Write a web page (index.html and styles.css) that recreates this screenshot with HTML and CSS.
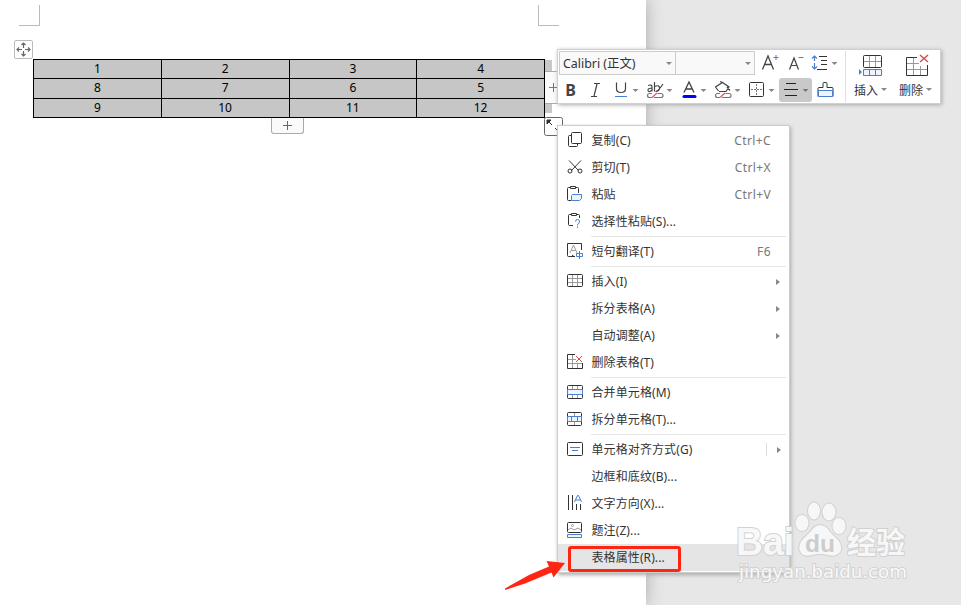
FILE: index.html
```html
<!DOCTYPE html>
<html lang="zh-CN">
<head>
<meta charset="utf-8">
<title>表格属性</title>
<link rel="stylesheet" href="styles.css">
</head>
<body>
<main class="page">
  <div class="margins"><i class="corner left"></i><i class="corner right"></i></div>
  <table class="grid">
    <tr><td>1</td><td>2</td><td>3</td><td>4</td></tr>
    <tr><td>8</td><td>7</td><td>6</td><td>5</td></tr>
    <tr><td>9</td><td>10</td><td>11</td><td>12</td></tr>
  </table>
  <svg class="move" width="19" height="19" viewBox="0 0 19 19"><rect x=".5" y=".5" width="18" height="18" rx="1.5" fill="#fff" stroke="#bbb"/><path d="M9.500 3v5M9.500 11v5M3 9.500h5M11 9.500h5M7.500 5l2-2 2 2M7.500 14l2 2 2-2M5 7.500l-2 2 2 2M14 7.500l2 2-2 2" fill="none" stroke="#666" stroke-width="1.200"/></svg>
  <i class="endmark"></i>
  <div class="add-col"><svg width="9" height="9"><path d="M0 4.500h9M4.500 0v9" stroke="#777"/></svg></div>
  <div class="add-row"><svg width="9" height="9"><path d="M0 4.500h9M4.500 0v9" stroke="#666"/></svg></div>
  <svg class="resize" width="19" height="19"><rect x=".5" y=".5" width="18" height="18" rx="2" fill="#fff" stroke="#666"/><path d="M3 3h4L3 7zM4 4l4 4M11 11l3 3" fill="#333" stroke="#333"/></svg>
</main>

<section class="toolbar">
  <div class="tools">
    <div class="row">
      <div class="combo font"><span>Calibri (正文)</span><i class="down"></i></div>
      <div class="combo size"><i class="down"></i></div>
      <svg class="tool t-grow" viewBox="0 0 28 24"><path d="M7.500 18.500 13 5l5.500 13.500M9.500 13.500h7" fill="none" stroke="#444" stroke-width="1.300"/><path d="M18.500 6.500h5M21 4v5" stroke="#4b7fd1"/></svg>
      <svg class="tool t-shrink" viewBox="0 0 25 24"><path d="M6.500 18.500 11 7l4.500 11.500M8 14.500h6" fill="none" stroke="#444" stroke-width="1.200"/><path d="M15.500 6.500h5" stroke="#4b7fd1"/></svg>
      <svg class="tool t-space" viewBox="0 0 32 24"><path d="M11 5.500h8M13 9.500h6M13 13.500h6M9 18.500h10" stroke="#333"/><path d="M6.500 5v5M6.500 12v6M4 7.500 6.500 5 9 7.500M4 15.500 6.500 18l2.500-2.500" fill="none" stroke="#4b7fd1" stroke-width="1.200"/><path d="M23.500 11h6l-3 3z" fill="#888"/></svg>
    </div>
    <div class="row second">
      <span class="tool t-letter bold">B</span>
      <svg class="tool t-letter" viewBox="0 0 25 24"><path d="M11 5.500h6M8 18.500h6M14 6l-3 12" stroke="#444" stroke-width="1.200"/></svg>
      <svg class="tool" viewBox="0 0 34 24"><path d="M8.500 4.500v6q0 4 4.500 4t4.500-4v-6" fill="none" stroke="#444" stroke-width="1.200"/><path d="M7 18.500h12" stroke="#4b7fd1"/><path d="M24.500 11h6l-3 3z" fill="#888"/></svg>
      <svg class="tool" viewBox="0 0 34 24"><g fill="none" stroke="#444" stroke-width="1.200"><path d="M6 7.500q4-1.500 4 1.500v4.500M10 10q-4 0-4 2t2 1.500l2-1.500M12.500 4v9.500M12.500 8.500q5-2 5 1.500t-4 3.500M21 6l-4.500 6-2.500 1.500"/><path d="M10 15.500H7.500a2 2 0 0 0 0 4H10M15.500 15.500H19a2 2 0 0 1 0 4h-7" stroke="#777"/></g><path d="m10 19.500 5-4.500" stroke="#e56262" stroke-width="1.500"/><path d="M24.500 11h6l-3 3z" fill="#888"/></svg>
      <svg class="tool" viewBox="0 0 34 24"><path d="M8 14.500 13 4l5 10.500M10 11h6" fill="none" stroke="#444" stroke-width="1.300"/><path d="M8 18.500h11" stroke="#00f" stroke-width="3" stroke-linecap="round"/><path d="M24.500 11h6l-3 3z" fill="#888"/></svg>
      <svg class="tool" viewBox="0 0 34 24"><g fill="none" stroke="#444" stroke-width="1.200"><path d="M8.500 13 5.500 9l7-4.500L19 9l-3 4.500H9M10 3.500l2.500 1M17 9l3 3.500"/><path d="M10 15.500H7.500a2 2 0 0 0 0 4H10M15.500 15.500H19a2 2 0 0 1 0 4h-7" stroke="#777"/></g><path d="m10 19.500 5-4.500" stroke="#e56262" stroke-width="1.500"/><path d="M24.500 11h6l-3 3z" fill="#888"/></svg>
      <svg class="tool" viewBox="0 0 34 24"><rect x="5.500" y="4.500" width="14" height="14" rx="1" fill="none" stroke="#333"/><path d="M7 11.500h11M12.500 6v11" stroke="#777" stroke-dasharray="2 1"/><path d="M24.500 11h6l-3 3z" fill="#888"/></svg>
      <svg class="tool" viewBox="0 0 34 24"><rect x="1" width="33" height="24" rx="3" fill="#c9c9c9"/><path d="M8 5.500h10M6 11.500h14M7 17.500h12" stroke="#222"/><path d="M24.500 11h6l-3 3z" fill="#777"/></svg>
      <svg class="tool t-stamp" viewBox="0 0 28 24"><path d="M6 18.500v-8q0-1 1-1h4v-4q0-1 1-1h2q1 0 1 1v4h5q1 0 1 1v8" fill="none" stroke="#333"/><path d="M6.500 12.500h14v6h-14z" fill="#edf3ff" stroke="#4b7fd1"/></svg>
    </div>
  </div>
  <div class="big insert"><svg width="26" height="24" viewBox="0 0 26 24"><rect x="5.500" y="1.500" width="18" height="12" rx="1" fill="#fff" stroke="#333"/><path d="M6 7.500h17M11.500 2v11M17.500 2v11" stroke="#999"/><path d="M5.500 15.500h18v6h-18zM11.500 15v6M17.500 15v6" fill="#edf3ff" stroke="#4b7fd1"/><path d="m1 15 3 3-3 3z" fill="#4b7fd1"/></svg><div>插入<i class="down"></i></div></div>
  <div class="big"><svg width="26" height="24" viewBox="0 0 26 24"><path d="M14 3.500H3.500v18h21V11" fill="none" stroke="#333"/><path d="M4 9.500h12M4 15.500h20M10.500 4v17M17.500 12v9" stroke="#999"/><path d="m17 1 8 7m0-7-8 7" stroke="#d64b4b" stroke-width="1.400"/></svg><div>删除<i class="down"></i></div></div>
</section>

<nav class="menu">
  <div class="item"><svg viewBox="0 0 16 16"><path d="M4 3.500H2.500q-1 0-1 1v9q0 1 1 1h7q1 0 1-1V12" fill="none"/><rect x="4.500" y=".5" width="10" height="11" rx="1" fill="none"/></svg><span>复制(C)</span><kbd>Ctrl+C</kbd></div>
  <div class="item"><svg viewBox="0 0 16 16"><path d="m2 1.500 9.500 10M14 1.500l-9.500 10" fill="none"/><circle cx="3" cy="12" r="2" fill="none"/><circle cx="13" cy="12" r="2" fill="none"/></svg><span>剪切(T)</span><kbd>Ctrl+X</kbd></div>
  <div class="item"><svg viewBox="0 0 16 16"><path d="M3.500 1.500h-2q-1 0-1 1v11q0 1 1 1H4M8.500 1.500h2q1 0 1 1V7M3.500.500h5v2h-5z" fill="none"/><path class="blue" d="M5.500 8.500h9v4l-2 2h-8v-5z" fill="#edf3ff"/></svg><span>粘贴</span><kbd>Ctrl+V</kbd></div>
  <div class="item"><svg viewBox="0 0 16 16"><path d="M4.500 1.500h-2q-1 0-1 1v9q0 1 1 1H6M9.500 1.500h2q1 0 1 1V5M4.500.500h5v2h-5z" fill="none"/><path class="blue" d="M8.500 8.500q0-2 2-2t2 2-2 3v1M10.500 13.500v1.500" fill="none"/></svg><span>选择性粘贴(S)...</span></div>
  <hr>
  <div class="item"><svg viewBox="0 0 16 16"><path d="M8 13.500H1.500q-1 0-1-1V.500h14V7M5 12l2 1.500" fill="none"/><path class="gray" d="m3 10 3.500-8L10 10M4.500 7.500h4" fill="none"/><path class="blue" d="M9.500 10.500h6v3h-6zM12.500 8v8" fill="none"/></svg><span>短句翻译(T)</span><kbd>F6</kbd></div>
  <hr>
  <div class="item"><svg viewBox="0 0 16 16"><path class="gray" d="M1 5.500h14M1 9.500h14M5.500 2v11M10.500 2v11"/><rect x=".5" y="1.500" width="15" height="12" rx="1" fill="none"/></svg><span>插入(I)</span><i class="more"></i></div>
  <div class="item"><svg></svg><span>拆分表格(A)</span><i class="more"></i></div>
  <div class="item"><svg></svg><span>自动调整(A)</span><i class="more"></i></div>
  <div class="item"><svg viewBox="0 0 16 16"><path class="gray" d="M1 5.500h8M1 9.500h14M5.500 1v13M10.500 9v5"/><path d="M8 .500H.500v14h15V9" fill="none"/><path class="red" d="m9 2 6 6m0-6L9 8"/></svg><span>删除表格(T)</span></div>
  <hr>
  <div class="item"><svg viewBox="0 0 16 16"><path class="gray" d="M5.500 1v13M10.500 1v13"/><rect x=".5" y="1.500" width="15" height="13" rx="1" fill="none"/><path class="blue" d="M.500 5.500h15v5H.500z" fill="#edf3ff"/></svg><span>合并单元格(M)</span></div>
  <div class="item"><svg viewBox="0 0 16 16"><path class="gray" d="M7.500 1v13"/><rect x=".5" y="1.500" width="14" height="13" rx="1" fill="none"/><path class="blue" d="M.500 5.500h14v5H.500zM4.500 5v5M10.500 5v5" fill="#edf3ff"/></svg><span>拆分单元格(T)...</span></div>
  <hr>
  <div class="item"><svg viewBox="0 0 16 16"><rect x=".5" y="1.500" width="15" height="13" rx="1" fill="none"/><path class="blue" d="M3 6.500h10M5 9.500h6"/></svg><span>单元格对齐方式(G)</span><i class="more split"></i></div>
  <div class="item"><svg></svg><span>边框和底纹(B)...</span></div>
  <div class="item"><svg viewBox="0 0 16 16"><path d="M1.500 0v15M5.500 0v15M9.500 9v6M13.500 9v6"/><path class="blue" d="m7.500 7 3-6.500h1l3 6.500M8.500 5h5" fill="none"/></svg><span>文字方向(X)...</span></div>
  <div class="item"><svg viewBox="0 0 16 16"><rect x=".5" y=".5" width="14" height="10" rx="1" fill="none"/><path class="gray" d="m1 8 3-2 3 2 4-2 3 2" fill="none"/><circle class="gray" cx="5.500" cy="3.500" r="1" fill="none"/><path class="blue" d="M.500 12.500h14v3H.500z" fill="#edf3ff"/></svg><span>题注(Z)...</span></div>
  <div class="item active"><svg></svg><span>表格属性(R)...</span></div>
</nav>

<div class="highlight"></div>
<svg class="pointer" width="62" height="30" viewBox="0 0 62 30"><path d="M0 27.500 24 14 44 5.500 41.500 0 60 2 48.500 16.500 46.500 11.500 20 22.500 0 29z" fill="#ff2513"/></svg>

<svg class="watermark" width="176" height="84" viewBox="0 0 176 84">
  <g class="mark">
    <text class="latin" x="0" y="54" font-size="39" textLength="58" lengthAdjust="spacingAndGlyphs">Bai</text>
    <ellipse cx="66" cy="22" rx="6.500" ry="8"/><ellipse cx="78" cy="10" rx="6" ry="8.500"/><ellipse cx="93" cy="11" rx="6.500" ry="8.500"/><ellipse cx="103" cy="25" rx="6.500" ry="8"/>
    <path d="M84 24q6 0 10 7l9 9q5 9-1 13-4 3-10 1-8-2-16 0-8 2-11-2-4-6 1-13l9-9q4-6 9-6z"/>
    <text x="111" y="52" font-size="30" textLength="58" lengthAdjust="spacingAndGlyphs">经验</text>
  </g>
  <text class="du" x="69" y="51" font-size="23" textLength="30" lengthAdjust="spacingAndGlyphs">du</text>
  <text class="url" x="3" y="77" font-size="17" textLength="168" lengthAdjust="spacingAndGlyphs">jingyan.baidu.com</text>
</svg>
</body>
</html>
```
FILE: styles.css
```css
* { box-sizing: border-box; }
body {
  margin: 0;
  width: 961px;
  height: 605px;
  overflow: hidden;
  position: relative;
  background: #e7e7e7;
  color: #333;
  font: 12px/18px "Noto Sans", "Noto Sans CJK SC", sans-serif;
}
svg { display: block; flex: none; }
.page {
  width: 646px;
  height: 605px;
  padding-top: 5px;
  background: #fff;
  box-shadow: 0 0 16px #aaa;
}
.margins {
  display: flex;
  justify-content: space-between;
  margin: 0 87px 33px 19px;
}
.corner { width: 21px; height: 21px; border-bottom: 1px solid #bbb; }
.left { border-right: 1px solid #bbb; }
.right { border-left: 1px solid #bbb; }
.grid {
  width: 512px;
  height: 59px;
  margin-left: 33px;
  border-collapse: collapse;
  table-layout: fixed;
  background: #c6c6c6;
  color: #000;
  font: 12px/14px "Noto Sans", sans-serif;
  text-align: center;
}
.grid td { border: 1px solid #000; padding: 0; }
.move { position: absolute; left: 14px; top: 40px; }
.endmark { position: absolute; left: 545px; top: 60px; width: 7px; height: 53px; background: #c8c8c8; }
.add-col, .add-row {
  position: absolute;
  display: flex;
  align-items: center;
  justify-content: center;
  background: #fafafa;
  border: 1px solid #aaa;
}
.add-col { left: 545px; top: 71px; width: 17px; height: 33px; border-left: 0; }
.add-row { left: 271px; top: 118px; width: 33px; height: 16px; border-top: 0; border-radius: 0 0 3px 3px; }
.resize { position: absolute; left: 544px; top: 117px; }

.toolbar {
  position: absolute;
  left: 557px;
  top: 49px;
  width: 384px;
  height: 55px;
  display: flex;
  background: #fff;
  border: 1px solid #d0d0d0;
  box-shadow: 1px 1px 4px #aaa;
}
.tools { width: 288px; margin: 1px 0; border-right: 1px solid #e0e0e0; }
.row { display: flex; height: 24px; }
.second { margin-top: 3px; }
.combo {
  display: flex;
  align-items: center;
  justify-content: space-between;
  height: 24px;
  padding: 0 3px;
  border: 1px solid #ccc;
  background: #f9f9f9;
}
.font { width: 117px; margin-left: 1px; }
.font span { font-size: 12.4px; padding-top: 2px; }
.size { width: 80px; margin-left: -1px; justify-content: flex-end; }
.down {
  display: inline-block;
  border: 3px solid transparent;
  border-top-color: #888;
  border-bottom: 0;
}
.tool { width: 34px; height: 24px; flex: none; }
.t-grow { width: 28px; }
.t-shrink { width: 25px; }
.t-space { width: 32px; }
.t-letter { width: 25px; }
.t-stamp { width: 28px; }
.bold { font: 700 16px/24px "Noto Sans", sans-serif; text-align: center; color: #444; }
.big {
  width: 45px;
  display: flex;
  flex-direction: column;
  align-items: center;
  padding: 4px 0 0 4px;
  line-height: 26px;
}
.big .down { margin: 0 0 4px 3px; }

.menu {
  position: absolute;
  left: 557px;
  top: 125px;
  width: 233px;
  height: 448px;
  padding-top: 1px;
  background: #fff;
  border: 1px solid #ccc;
  box-shadow: 1px 2px 4px #aaa;
}
.item { display: flex; align-items: center; height: 27px; padding: 0 18px 0 9px; letter-spacing: .1px; }
.item svg { width: 16px; height: 16px; margin: 0 8.5px 2px 0; fill: none; stroke: #333; overflow: visible; }
.item .blue { stroke: #4b7fd1; }
.item .gray { stroke: #999; }
.item .red { stroke: #d64b4b; }
.item kbd { margin-left: auto; color: #777; font: inherit; letter-spacing: .4px; }
.active { background: #e5e5e5; }
.menu hr { height: 1px; margin: 1px 3px 1px 33px; border: 0; background: #e5e5e5; }
.more {
  margin: 0 -13px 0 auto;
  display: flex;
  align-items: center;
  height: 13px;
  padding-left: 10px;
  width: 18px;
}
.more::after { content: ""; border: 3px solid transparent; border-left: 4px solid #888; border-right: 0; }
.split { border-left: 1px solid #ddd; }

.highlight { position: absolute; left: 568px; top: 546px; width: 113px; height: 26px; border: 3px solid #ff2513; border-radius: 3px; }
.pointer { position: absolute; left: 505px; top: 561px; }
.watermark { position: absolute; left: 736px; top: 501px; opacity: .95; font-family: "Noto Sans", "Noto Sans CJK SC", sans-serif; }
.mark { fill: #f8f8f8; stroke: #d0d0d0; stroke-width: 2px; paint-order: stroke; font-weight: 700; }
.latin { font-family: "Liberation Sans", sans-serif; }
.du { font-family: "Liberation Sans", sans-serif; font-weight: 700; fill: #ccc; }
.url { font-family: "DejaVu Sans", sans-serif; fill: #fafafa; stroke: #d2d2d2; stroke-width: 2px; paint-order: stroke; }
```
